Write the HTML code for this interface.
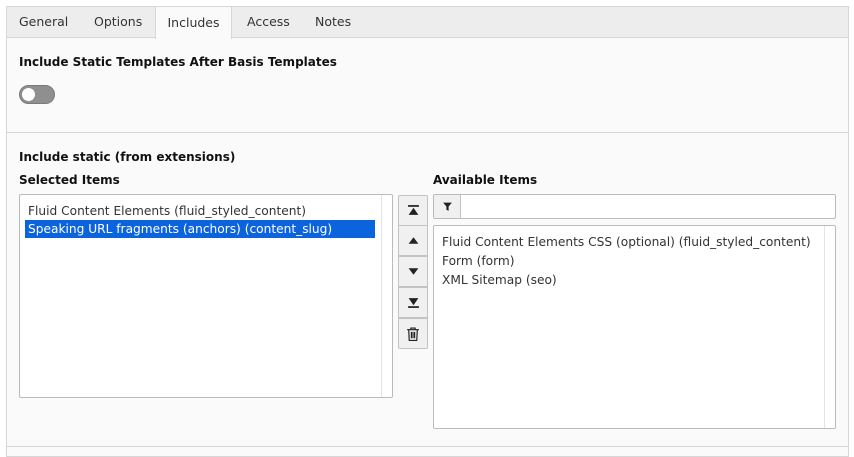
<!DOCTYPE html>
<html><head><meta charset="utf-8"><style>
*{box-sizing:border-box;margin:0;padding:0}
body{width:854px;height:455px;background:#fff;font-family:"DejaVu Sans","Liberation Sans",sans-serif;font-size:12px;color:#1a1a1a;position:relative;overflow:hidden}
.a{position:absolute}
.tabbar{left:6px;top:6px;width:843px;height:32px;background:#ededed;border:1px solid #d7d7d7;border-bottom:none}
.tab{top:7px;height:32px;line-height:30px;font-size:12.5px;color:#333}
.panel{left:6px;top:37px;width:843px;height:420px;background:#fafafa;border:1px solid #d7d7d7}
h{position:absolute;font-weight:bold;font-size:12px;color:#111}
.box{background:#fff;border:1px solid #bbb;border-radius:2px}
.btn{left:398px;width:30px;height:31px;background:#f0f0f0;border:1px solid #c3c3c3;display:flex;align-items:center;justify-content:center}
.it{position:absolute;font-size:12.2px;white-space:nowrap;color:#333}
</style></head><body>
<div class="a tabbar"></div>
<div class="a tab" style="left:19px">General</div>
<div class="a tab" style="left:94px">Options</div>
<div class="a" style="left:155px;top:6px;width:77px;height:33px;background:#fafafa;border:1px solid #d7d7d7;border-bottom:none;z-index:2;line-height:31px;text-align:center;font-size:12.5px;color:#333">Includes</div>
<div class="a tab" style="left:247px">Access</div>
<div class="a tab" style="left:315px">Notes</div>
<div class="a panel"></div>
<h style="left:19px;top:55px">Include Static Templates After Basis Templates</h>
<div class="a" style="left:19px;top:85px;width:36px;height:19px;border-radius:10px;background:#8f8f8f;border:1px solid #7a7a7a"></div>
<div class="a" style="left:22px;top:88px;width:13px;height:13px;border-radius:50%;background:#fff"></div>
<div class="a" style="left:7px;top:132px;width:841px;height:1px;background:#d7d7d7"></div>
<h style="left:19px;top:150px">Include static (from extensions)</h>
<h style="left:19px;top:173px">Selected Items</h>
<h style="left:433px;top:173px">Available Items</h>
<div class="a box" style="left:19px;top:194px;width:374px;height:204px"></div>
<div class="a" style="left:381px;top:195px;width:1px;height:202px;background:#e3e3e3"></div>
<div class="it" style="left:28px;top:204px">Fluid Content Elements (fluid_styled_content)</div>
<div class="a" style="left:25px;top:220px;width:350px;height:18px;background:#0b64dd"></div>
<div class="it" style="left:28px;top:222px;color:#fff">Speaking URL fragments (anchors) (content_slug)</div>
<div class="a btn" style="top:195px;border-radius:2px 2px 0 0"><svg width="13" height="13" viewBox="0 0 12 12"><rect x="1" y="1" width="10" height="1.6" fill="#222"/><path d="M6 3.5L10.5 10H1.5Z" fill="#222"/></svg></div>
<div class="a btn" style="top:225px"><svg width="13" height="13" viewBox="0 0 12 12"><path d="M6 3L10.5 9H1.5Z" fill="#222"/></svg></div>
<div class="a btn" style="top:256px"><svg width="13" height="13" viewBox="0 0 12 12"><path d="M6 9L10.5 3H1.5Z" fill="#222"/></svg></div>
<div class="a btn" style="top:287px"><svg width="13" height="13" viewBox="0 0 12 12"><path d="M6 8.5L10.5 2H1.5Z" fill="#222"/><rect x="1" y="9.4" width="10" height="1.6" fill="#222"/></svg></div>
<div class="a btn" style="top:318px;border-radius:0 0 2px 2px"><svg width="14" height="16" viewBox="0 0 13 14"><path d="M1 3H12M4.5 3V1.5H8.5V3M2.5 3L3 13H10L10.5 3M5 5V11M6.5 5V11M8 5V11" stroke="#222" fill="none" stroke-width="1.1"/></svg></div>
<div class="a box" style="left:433px;top:194px;width:403px;height:25px"></div>
<div class="a" style="left:434px;top:195px;width:27px;height:23px;background:#f0f0f0;border-right:1px solid #c3c3c3;display:flex;align-items:center;justify-content:center"><svg width="11" height="11" viewBox="0 0 10 10"><path d="M1 1.5H9L6 5V9L4 8V5Z" fill="#222"/></svg></div>
<div class="a box" style="left:433px;top:225px;width:403px;height:204px"></div>
<div class="a" style="left:824px;top:226px;width:1px;height:202px;background:#e3e3e3"></div>
<div class="it" style="left:442px;top:235px">Fluid Content Elements CSS (optional) (fluid_styled_content)</div>
<div class="it" style="left:442px;top:254px">Form (form)</div>
<div class="it" style="left:442px;top:273px">XML Sitemap (seo)</div>
<div class="a" style="left:7px;top:446px;width:841px;height:1px;background:#d7d7d7"></div>
</body></html>
